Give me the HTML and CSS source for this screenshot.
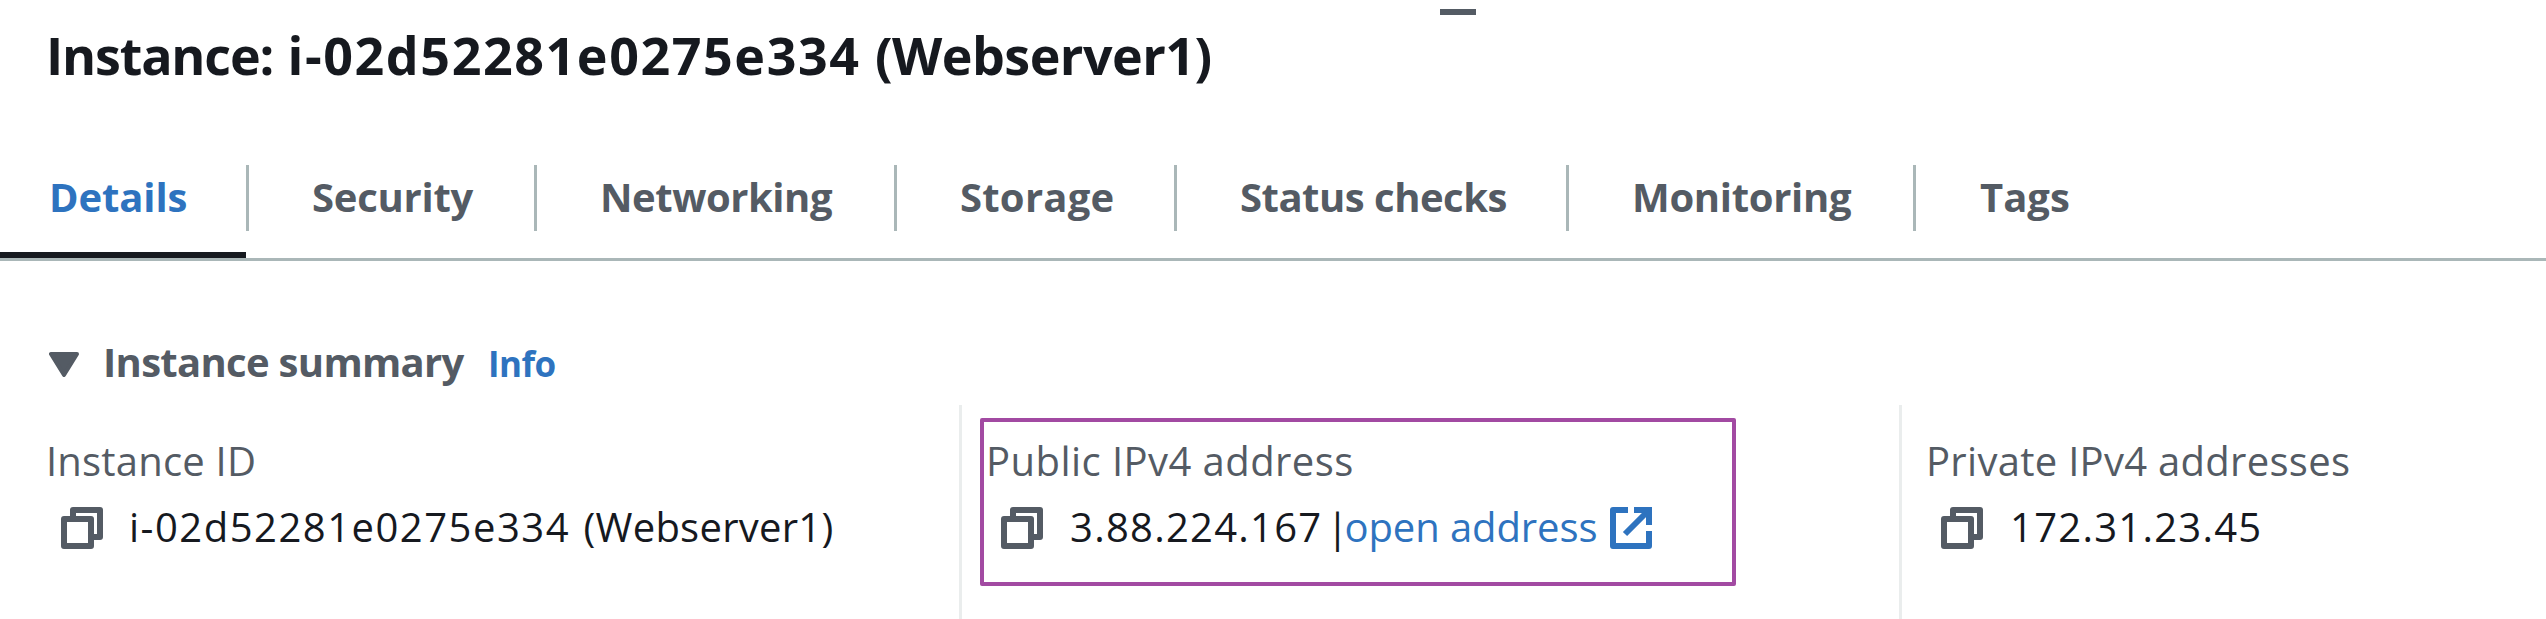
FILE: index.html
```html
<!DOCTYPE html>
<html lang="en">
<head>
<meta charset="utf-8">
<title>Instance details</title>
<link rel="stylesheet" href="styles.css">
</head>
<body>
<svg width="0" height="0" class="defs">
  <symbol id="copy" viewBox="0 0 42 42">
    <path d="M12 12V3h27v27h-9" fill="none" stroke="currentColor" stroke-width="6" stroke-linejoin="round"/>
    <rect x="3" y="12" width="27" height="27" fill="none" stroke="currentColor" stroke-width="6" stroke-linejoin="round"/>
  </symbol>
  <symbol id="external" viewBox="0 0 42 42">
    <path d="M18 3H3v36h36V24" fill="none" stroke="currentColor" stroke-width="6" stroke-linejoin="round"/>
    <path d="M24 3h15v15M38 4L15 27" fill="none" stroke="currentColor" stroke-width="6"/>
  </symbol>
</svg>
<main class="panel">
  <div class="handle"></div>
  <h1 class="title">Instance: <span class="title-id">i-02d52281e0275e334</span> <span class="title-name">(Webserver1)</span></h1>
  <nav class="tabs">
    <a class="tab active">Details</a>
    <a class="tab security">Security</a>
    <a class="tab networking">Networking</a>
    <a class="tab storage">Storage</a>
    <a class="tab status">Status checks</a>
    <a class="tab monitoring">Monitoring</a>
    <a class="tab tags">Tags</a>
  </nav>
  <section class="summary">
    <header class="summary-head">
      <svg class="caret" viewBox="0 0 30 25"><path d="M2 2h26L15 23z" fill="currentColor" stroke="currentColor" stroke-width="4" stroke-linejoin="round"/></svg>
      <h2 class="summary-title">Instance summary</h2>
      <a class="info">Info</a>
    </header>
    <div class="columns">
      <div class="column">
        <div class="label id-label">Instance ID</div>
        <div class="value"><svg class="icon"><use href="#copy"/></svg><span><span class="id">i-02d52281e0275e334</span> <span class="name">(Webserver1)</span></span></div>
      </div>
      <div class="column">
        <div class="highlight"></div>
        <div class="label public-label">Public IPv4 address</div>
        <div class="value"><svg class="icon"><use href="#copy"/></svg><span class="ip">3.88.224.167</span><span class="bar">|</span><a class="link">open address</a><svg class="icon external"><use href="#external"/></svg></div>
      </div>
      <div class="column">
        <div class="label private-label">Private IPv4 addresses</div>
        <div class="value"><svg class="icon"><use href="#copy"/></svg><span class="ip">172.31.23.45</span></div>
      </div>
    </div>
  </section>
</main>
</body>
</html>
```
FILE: styles.css
```css
* { box-sizing: border-box; }
body { margin: 0; background: #fff; color: #16191f; font: 40px/60px "Open Sans", "Noto Sans", sans-serif; overflow: hidden; }
.defs { display: block; }
.panel { display: flex; flex-direction: column; height: 619px; padding-top: 9px; }
.handle { width: 36px; height: 6px; margin-left: 1440px; background: #545b64; }
.title { margin: 8px 0 78px 46px; font-size: 52px; line-height: 64px; font-weight: 700; letter-spacing: -1.17px; white-space: nowrap; }
.title-id { margin-left: 2px; letter-spacing: 1.57px; }
.title-name { margin-left: 2px; letter-spacing: -0.52px; }
.tabs { display: grid; grid-template-columns: 249px 288px 360px 280px 392px 347px 1fr; height: 96px; border-bottom: 3px solid #aab7b8; flex: none; }
.tab { height: 66px; padding-left: 63px; border-right: 3px solid #aab7b8; color: #545b64; font-weight: 700; line-height: 64px; white-space: nowrap; }
.active { position: relative; padding-left: 49px; color: #2e73bf; letter-spacing: -0.11px; }
.active::after { content: ""; position: absolute; left: 0; right: 0; top: 87px; height: 6px; background: #16191f; }
.security { letter-spacing: -0.25px; }
.networking { letter-spacing: -0.45px; }
.storage { letter-spacing: 0.24px; }
.status { letter-spacing: -0.49px; }
.monitoring { letter-spacing: -0.32px; }
.tags { padding-left: 64px; border-right: 0; }
.summary { display: flex; flex-direction: column; flex: 1; padding-top: 71px; }
.summary-head { display: flex; align-items: baseline; height: 73px; padding-left: 49px; }
.caret { width: 30px; height: 25px; color: #545b64; margin-right: 24px; }
.summary-title { margin: 0; width: 385px; font-size: 40px; font-weight: 700; letter-spacing: -0.69px; color: #545b64; }
.info { font-size: 35px; font-weight: 700; letter-spacing: -0.55px; color: #2e73bf; }
.columns { display: grid; grid-template-columns: 959px 940px 1fr; flex: 1; }
.column { position: relative; padding: 26px 0 0 24px; border-left: 3px solid #eaeded; white-space: nowrap; }
.column:first-child { padding-left: 46px; border-left: 0; }
.label { color: #545b64; height: 65px; }
.id-label { letter-spacing: 0.2px; }
.public-label { letter-spacing: 0.44px; }
.private-label { letter-spacing: 0.29px; }
.value { display: flex; height: 62px; padding-left: 15px; line-height: 62px; }
.icon { width: 42px; height: 42px; margin: 11px 26px 0 0; color: #545b64; flex: none; }
.id { letter-spacing: 1.5px; }
.name { margin-left: 3px; letter-spacing: 0.25px; }
.ip { margin-left: 1px; letter-spacing: 1.26px; }
.bar { margin-left: 4px; letter-spacing: -4px; }
.link { color: #2e73bf; letter-spacing: -0.09px; }
.external { margin: 11px 0 0 13px; color: #2e73bf; }
.highlight { position: absolute; left: 18px; top: 13px; width: 756px; height: 168px; border: 4px solid #a24aa2; border-radius: 2px; }
```
